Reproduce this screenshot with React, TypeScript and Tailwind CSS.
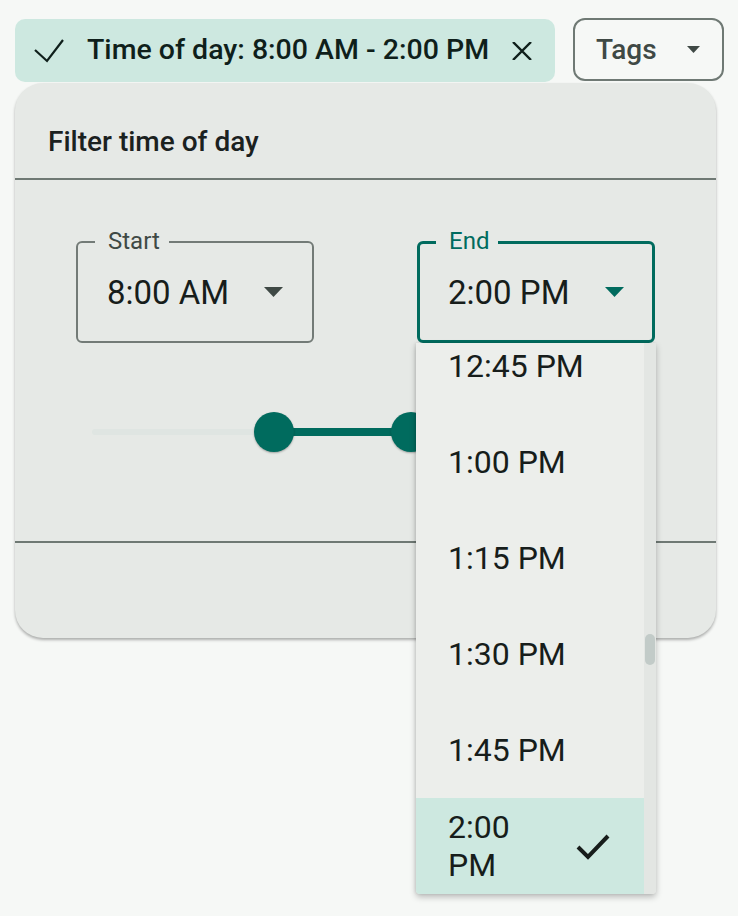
const TIMES = ["12:45 PM", "1:00 PM", "1:15 PM", "1:30 PM", "1:45 PM", "2:00 PM"];
const selected = "2:00 PM";
// hours on a 0..24 scale
const range = { start: 8, end: 14 };
const pct = (h: number) => `${(h / 24) * 100}%`;

const Caret = ({ className }: { className?: string }) => (
  <svg width="19" height="10" viewBox="0 0 19 10" className={className}>
    <path d="M0 0h19L9.5 10z" fill="currentColor" />
  </svg>
);

type FieldProps = {
  label: string;
  value: string;
  focused?: boolean;
  children?: React.ReactNode;
};

const TimeField = ({ label, value, focused, children }: FieldProps) => (
  <div
    className={
      focused
        ? "relative h-[102px] w-[238px] rounded-[6px] border-[3px] border-[#006b5e]"
        : "relative h-[102px] w-[238px] rounded-[6px] border-2 border-[#737b77]"
    }
  >
    <span
      className={
        focused
          ? "absolute -top-[15.5px] left-[16px] bg-[#e6e9e6] pl-[13px] pr-[9px] text-[24px] leading-[24px] text-[#006b5e]"
          : "absolute -top-[14.5px] left-[17px] bg-[#e6e9e6] pl-[13px] pr-[9px] text-[24px] leading-[24px] text-[#3f4945]"
      }
    >
      {label}
    </span>
    <div
      className={
        focused
          ? "flex h-full items-center justify-between pl-[28px] pr-[28px]"
          : "flex h-full items-center justify-between pl-[29px] pr-[29px]"
      }
    >
      <span className="text-[33px] leading-none text-[#171d1b]">{value}</span>
      <Caret className={focused ? "text-[#006b5e]" : "text-[#3f4945]"} />
    </div>
    {children}
  </div>
);

const TimeMenu = () => (
  <div className="absolute left-[-4px] top-[99px] z-10 flex h-[551px] w-[240px] overflow-hidden rounded-b-[4px] bg-[#eceeeb] shadow-[0_3px_6px_rgba(0,0,0,0.25),-1px_0_3px_rgba(0,0,0,0.08)]">
    <ul className="-mt-[25px] flex w-[228px] flex-col">
      {TIMES.map((t) =>
        t === selected ? (
          <li
            key={t}
            className="flex h-[96px] shrink-0 items-center bg-[#cde8e0] pl-[32px] pr-[34px] text-[32px] leading-[38px] text-[#171d1b]"
          >
            <span className="mr-[24px] flex-1">{t}</span>
            <svg width="34" height="28" viewBox="0 0 34 28">
              <polyline
                points="2,15 12,25 32,4"
                fill="none"
                stroke="#171d1b"
                strokeWidth="4"
              />
            </svg>
          </li>
        ) : (
          <li
            key={t}
            className="flex h-[96px] shrink-0 items-center pl-[32px] text-[32px] leading-none text-[#171d1b]"
          >
            {t}
          </li>
        )
      )}
    </ul>
    <div className="flex w-[12px] flex-col items-center bg-[#e3e6e3]">
      <div className="mt-[291px] h-[31px] w-[10px] rounded-full bg-[#c2cbc8]" />
    </div>
  </div>
);

const RangeSlider = () => (
  <div className="relative mx-[77px] h-[40px]">
    <div className="absolute inset-x-0 top-1/2 h-[6px] -translate-y-1/2 rounded-full bg-[#dfe5e2]" />
    <div
      className="absolute top-1/2 h-[8px] -translate-y-1/2 bg-[#006b5e]"
      style={{ left: pct(range.start), width: pct(range.end - range.start) }}
    />
    {[range.start, range.end].map((h) => (
      <div
        key={h}
        className="absolute top-0 -ml-[20px] h-[40px] w-[40px] rounded-full bg-[#006b5e] shadow-[0_1px_2px_rgba(0,0,0,0.3)]"
        style={{ left: pct(h) }}
      />
    ))}
  </div>
);

export default function App() {
  return (
    <div className="min-h-screen bg-[#f6f8f6] pl-[15px] pt-[18px] font-['Roboto',sans-serif]">
      <div className="flex items-start gap-[18px]">
        <div className="mt-px flex h-[63px] w-[540px] items-center rounded-[10px] bg-[#cde8e0] pl-[19px] text-[#0f1f1b]">
          <svg width="30" height="24" viewBox="0 0 30 24">
            <polyline
              points="1,11 13,22 29,1"
              fill="none"
              stroke="currentColor"
              strokeWidth="2.2"
            />
          </svg>
          <span className="ml-[23px] text-[28.5px] font-medium leading-none">
            Time of day: 8:00 AM - 2:00 PM
          </span>
          <svg width="20" height="18" viewBox="0 0 20 18" className="ml-auto mr-[23px]">
            <path d="M1 0 19 18M19 0 1 18" stroke="currentColor" strokeWidth="2.4" />
          </svg>
        </div>
        <button className="flex h-[63px] w-[151px] items-center rounded-[12px] border-2 border-[#6f7974] pl-[21px] text-[#3f4945]">
          <span className="text-[28px] font-medium leading-none">Tags</span>
          <svg width="13" height="7" viewBox="0 0 13 7" className="ml-[30px]">
            <path d="M0 0h13L6.5 7z" fill="currentColor" />
          </svg>
        </button>
      </div>

      <div className="mt-px flex h-[555px] w-[701px] flex-col rounded-[28px] bg-[#e6e9e6] shadow-[0_2px_3px_rgba(0,0,0,0.3)]">
        <div className="flex h-[95px] items-end pb-[20px] pl-[33px]">
          <h2 className="text-[28px] font-medium leading-[32px] text-[#1b211f]">
            Filter time of day
          </h2>
        </div>
        <div className="h-[2px] bg-[#6f7974]" />
        <div className="h-[361px] pt-[61px]">
          <div className="flex justify-between px-[61px]">
            <TimeField label="Start" value="8:00 AM" />
            <TimeField label="End" value="2:00 PM" focused>
              <TimeMenu />
            </TimeField>
          </div>
          <div className="mt-[69px]">
            <RangeSlider />
          </div>
        </div>
        <div className="h-[2px] bg-[#6f7974]" />
        <div className="flex-1" />
      </div>
    </div>
  );
}
